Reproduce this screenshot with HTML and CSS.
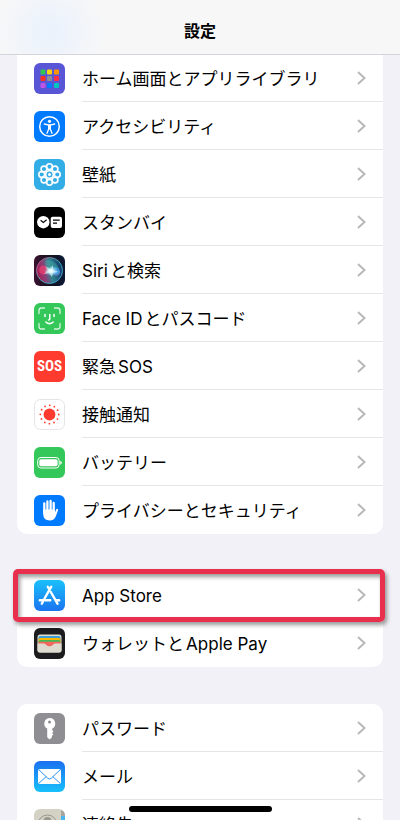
FILE: index.html
```
<!DOCTYPE html>
<html lang="ja">
<head>
    <meta charset="UTF-8" />
    <title>設定</title>
    <meta name="viewport" content="width=device-width, initial-scale=1">
    <link rel="stylesheet" href="styles.css">
</head>
<body>

<header>
  <h1>設定</h1>
</header>

<main>
  <ul class="group first">
    <li><a href="#home">
      <svg class="icon" viewBox="0 0 31 31">
        <rect width="31" height="31" rx="6" fill="#5856d6"/>
        <rect x="6.500" y="6.500" width="5" height="5" rx="1" fill="#30c850"/>
        <rect x="13" y="6.500" width="5" height="5" rx="1" fill="#ffd60a"/>
        <rect x="20" y="6.500" width="5" height="5" rx="1" fill="#ff9500"/>
        <rect x="6.500" y="13" width="5" height="5" rx="1" fill="#ff3020"/>
        <rect x="13" y="13" width="5" height="5" rx="1" fill="#8e8e93"/>
        <rect x="20" y="13" width="5" height="5" rx="1" fill="#ff2d4a"/>
        <rect x="6.500" y="20" width="5" height="5" rx="1" fill="#bf55e6"/>
        <rect x="13" y="20" width="5" height="5" rx="1" fill="#007aff"/>
        <rect x="20" y="20" width="5" height="5" rx="1" fill="#00c7be"/>
      </svg>
      <span class="label">ホーム画面とアプリライブラリ</span>
      <svg class="chevron" viewBox="0 0 9 14"><path d="M1 1l6.500 6L1 13"/></svg>
    </a></li>
    <li><a href="#accessibility">
      <svg class="icon" viewBox="0 0 31 31">
        <rect width="31" height="31" rx="6" fill="#007aff"/>
        <circle cx="15.500" cy="15.500" r="9.800" fill="none" stroke="#fff" stroke-width="1.500"/>
        <circle cx="15.500" cy="10.300" r="1.600" fill="#fff"/>
        <path d="M10.300 13l3.700.8h3l3.700-.8M14.700 14v4l-1.700 4.300M16.300 14v4l1.700 4.300" fill="none" stroke="#fff" stroke-width="1.300" stroke-linecap="round" stroke-linejoin="round"/>
        <path d="M14 13.600h3v4.900h-3z" fill="#fff"/>
      </svg>
      <span class="label">アクセシビリティ</span>
      <svg class="chevron" viewBox="0 0 9 14"><path d="M1 1l6.500 6L1 13"/></svg>
    </a></li>
    <li><a href="#wallpaper">
      <svg class="icon" viewBox="0 0 31 31">
        <rect width="31" height="31" rx="6" fill="#32ade6"/>
        <g fill="none" stroke="#fff" stroke-width="1.600">
          <circle cx="15.500" cy="7.700" r="2.900"/>
          <circle cx="21" cy="10" r="2.900"/>
          <circle cx="23.300" cy="15.500" r="2.900"/>
          <circle cx="21" cy="21" r="2.900"/>
          <circle cx="15.500" cy="23.300" r="2.900"/>
          <circle cx="10" cy="21" r="2.900"/>
          <circle cx="7.700" cy="15.500" r="2.900"/>
          <circle cx="10" cy="10" r="2.900"/>
          <circle cx="15.500" cy="15.500" r="3.800"/>
        </g>
        <circle cx="15.500" cy="15.500" r="1.500" fill="#fff"/>
      </svg>
      <span class="label">壁紙</span>
      <svg class="chevron" viewBox="0 0 9 14"><path d="M1 1l6.500 6L1 13"/></svg>
    </a></li>
    <li><a href="#standby">
      <svg class="icon" viewBox="0 0 31 31">
        <rect width="31" height="31" rx="6" fill="#000"/>
        <circle cx="9.300" cy="15.200" r="6.200" fill="#fff"/>
        <path d="M6.600 13.300l2.700 2.200 3.300-2.700" fill="none" stroke="#000" stroke-width="1.100"/>
        <rect x="16.700" y="9.700" width="11.300" height="11.300" rx="2" fill="#fff"/>
        <path d="M19 13.200h6.700M19 16.200h4" stroke="#000" stroke-width="1.200"/>
      </svg>
      <span class="label">スタンバイ</span>
      <svg class="chevron" viewBox="0 0 9 14"><path d="M1 1l6.500 6L1 13"/></svg>
    </a></li>
    <li><a href="#siri">
      <svg class="icon" viewBox="0 0 31 31">
        <defs>
          <linearGradient id="siri-bg" x1="0" y1="0" x2="1" y2="0">
            <stop offset="0" stop-color="#3a1030"/>
            <stop offset=".5" stop-color="#12141c"/>
            <stop offset="1" stop-color="#0c1834"/>
          </linearGradient>
          <linearGradient id="siri-ring" x1="0" y1="0" x2="1" y2="1">
            <stop offset="0" stop-color="#d13d7c"/>
            <stop offset=".5" stop-color="#4ab0b0"/>
            <stop offset="1" stop-color="#3a8fe0"/>
          </linearGradient>
          <linearGradient id="siri-orb" x1="0" y1=".6" x2="1" y2=".4">
            <stop offset="0" stop-color="#b01850"/>
            <stop offset=".3" stop-color="#8b4078"/>
            <stop offset=".55" stop-color="#2f8590"/>
            <stop offset="1" stop-color="#10356a"/>
          </linearGradient>
          <radialGradient id="siri-glow">
            <stop offset="0" stop-color="#fff"/>
            <stop offset=".3" stop-color="#e4ffff" stop-opacity=".9"/>
            <stop offset="1" stop-color="#8adcf0" stop-opacity="0"/>
          </radialGradient>
        </defs>
        <rect width="31" height="31" rx="6" fill="url(#siri-bg)"/>
        <circle cx="15.500" cy="15.500" r="13" fill="url(#siri-orb)" stroke="url(#siri-ring)" stroke-width="1"/>
        <path d="M5 15c2-7 7-5 10 0s8 8 11 3c-1-7-7-6-11-2S7 22 5 15z" fill="#ef3f70" opacity=".75"/>
        <path d="M15 15c4-4 9-4 11 1 0 6-7 6-11-1z" fill="#329be9" opacity=".9"/>
        <path d="M11 6c5-3 12 2 14 8-3-2-7 2-9 2s-5-5-5-10z" fill="#49b9ae" opacity=".4"/>
        <path d="M11 11l5 3 3-4 0 5 6 2-6 1-1 4-3-4-5 1 4-4z" fill="#fff" opacity=".6"/>
        <ellipse cx="17" cy="16" rx="7" ry="5" fill="url(#siri-glow)"/>
      </svg>
      <span class="label">Siriと検索</span>
      <svg class="chevron" viewBox="0 0 9 14"><path d="M1 1l6.500 6L1 13"/></svg>
    </a></li>
    <li><a href="#faceid">
      <svg class="icon" viewBox="0 0 31 31">
        <rect width="31" height="31" rx="6" fill="#34c759"/>
        <g fill="none" stroke="#fff" stroke-linecap="round">
          <path d="M5 10.500V7.500Q5 5 7.500 5h3M20.500 5h3Q26 5 26 7.500v3M26 20.500v3Q26 26 23.500 26h-3M10.500 26h-3Q5 26 5 23.500v-3" stroke-width="1.300" opacity=".8"/>
          <path d="M11 11.500v2M20 11.500v2M15.800 11.500v4.500q0 1-1.300 1M11.800 19q3.700 3.300 7.400 0" stroke-width="1.500"/>
        </g>
      </svg>
      <span class="label">Face IDとパスコード</span>
      <svg class="chevron" viewBox="0 0 9 14"><path d="M1 1l6.500 6L1 13"/></svg>
    </a></li>
    <li><a href="#sos">
      <span class="icon sos">SOS</span>
      <span class="label">緊急SOS</span>
      <svg class="chevron" viewBox="0 0 9 14"><path d="M1 1l6.500 6L1 13"/></svg>
    </a></li>
    <li><a href="#exposure">
      <svg class="icon" viewBox="0 0 31 31">
        <rect x=".5" y=".5" width="30" height="30" rx="6" fill="#fff" stroke="#e5e5e7"/>
        <circle cx="15.500" cy="15.500" r="5.900" fill="#ff3b30"/>
        <circle cx="15.500" cy="15.500" r="9.200" fill="none" stroke="#ff3b30" stroke-width="1.800" stroke-linecap="round" stroke-dasharray="0 4.817"/>
      </svg>
      <span class="label">接触通知</span>
      <svg class="chevron" viewBox="0 0 9 14"><path d="M1 1l6.500 6L1 13"/></svg>
    </a></li>
    <li><a href="#battery">
      <svg class="icon" viewBox="0 0 31 31">
        <rect width="31" height="31" rx="6" fill="#34c759"/>
        <rect x="3.700" y="10.500" width="21.500" height="10.500" rx="3.300" fill="none" stroke="#fff" stroke-width="1"/>
        <rect x="5.300" y="12.200" width="18.300" height="7.100" rx="1.800" fill="#fff"/>
        <path d="M26.300 13.800q1.500.3 1.500 2t-1.500 2z" fill="#fff"/>
      </svg>
      <span class="label">バッテリー</span>
      <svg class="chevron" viewBox="0 0 9 14"><path d="M1 1l6.500 6L1 13"/></svg>
    </a></li>
    <li><a href="#privacy">
      <svg class="icon" viewBox="0 0 31 31">
        <rect width="31" height="31" rx="6" fill="#007aff"/>
        <path d="M10.300 8.500v9M13.400 6.500v10M16.600 6v10M19.700 8v10" stroke="#fff" stroke-width="2.300" stroke-linecap="round"/>
        <path d="M9.150 14.500h11.700v3.300l1.300-3.200q.7-1.200 1.700-.5.500.4.200 1.200l-2.300 6.200q-1.700 4-5.900 4-6.700 0-6.700-7z" fill="#fff"/>
      </svg>
      <span class="label">プライバシーとセキュリティ</span>
      <svg class="chevron" viewBox="0 0 9 14"><path d="M1 1l6.500 6L1 13"/></svg>
    </a></li>
  </ul>

  <ul class="group">
    <li class="marked"><a href="#appstore">
      <svg class="icon" viewBox="0 0 31 31">
        <defs>
          <linearGradient id="store-bg" x1="0" y1="0" x2="0" y2="1">
            <stop offset="0" stop-color="#1ac0fb"/>
            <stop offset="1" stop-color="#1b74f0"/>
          </linearGradient>
        </defs>
        <rect width="31" height="31" rx="6" fill="url(#store-bg)"/>
        <path d="M17.200 6.800l-6.700 11.700M8.800 22l-1 1.700M13.800 6.800l1.700 2.700M16.800 12l6.700 11.700M5.800 20.200h10.500M21.500 20.200h3.700" stroke="#fff" stroke-width="2.400" stroke-linecap="round"/>
      </svg>
      <span class="label">App Store</span>
      <svg class="chevron" viewBox="0 0 9 14"><path d="M1 1l6.500 6L1 13"/></svg>
    </a></li>
    <li><a href="#wallet">
      <svg class="icon" viewBox="0 0 31 31">
        <rect width="31" height="31" rx="6" fill="#1c1c1e"/>
        <rect x="3.500" y="6.500" width="24" height="18" rx="2.500" fill="#dedbd0"/>
        <rect x="4.500" y="8" width="22" height="5" rx="1.500" fill="#3c9fd5"/>
        <rect x="4.500" y="10" width="22" height="5" rx="1.500" fill="#ffb400"/>
        <rect x="4.500" y="12" width="22" height="5" rx="1.500" fill="#45b854"/>
        <path d="M4.500 13.700h22v3.300h-7q-4 3.500-8 0h-7z" fill="#f2685c"/>
        <path d="M3.500 15.500h6q1.500 0 2.500 1.200 1.500 1.800 3.500 1.800t3.500-1.800q1-1.200 2.500-1.200h6V22q0 2.500-2.500 2.500H6Q3.500 24.500 3.500 22z" fill="#dedbd0"/>
      </svg>
      <span class="label">ウォレットとApple Pay</span>
      <svg class="chevron" viewBox="0 0 9 14"><path d="M1 1l6.500 6L1 13"/></svg>
    </a></li>
  </ul>

  <ul class="group">
    <li><a href="#passwords">
      <svg class="icon" viewBox="0 0 31 31">
        <rect width="31" height="31" rx="6" fill="#8e8e93"/>
        <path fill-rule="evenodd" d="M15.500 5a5.600 5.600 0 0 1 2.800 10.500v1.700l1.200 1.200-1.400 1.600 1.200 1.500-1.600 1.700.4 1-2.600 2.300-2.300-2.200v-8.800A5.600 5.600 0 0 1 15.500 5zm0 2.500a1.500 1.500 0 1 0 0 3 1.500 1.500 0 0 0 0-3z" fill="#fff"/>
      </svg>
      <span class="label">パスワード</span>
      <svg class="chevron" viewBox="0 0 9 14"><path d="M1 1l6.500 6L1 13"/></svg>
    </a></li>
    <li><a href="#mail">
      <svg class="icon" viewBox="0 0 31 31">
        <defs>
          <linearGradient id="mail-bg" x1="0" y1="0" x2="0" y2="1">
            <stop offset="0" stop-color="#1a70f0"/>
            <stop offset="1" stop-color="#17c0fb"/>
          </linearGradient>
        </defs>
        <rect width="31" height="31" rx="6" fill="url(#mail-bg)"/>
        <rect x="4" y="8" width="23" height="15" rx="2" fill="#fff"/>
        <path d="M4.800 8.700l9 8.600q1.700 1.400 3.400 0l9-8.600M4.800 22.300l7.500-6.700M26.200 22.300l-7.500-6.700" fill="none" stroke="#2e95f2" stroke-width="1"/>
      </svg>
      <span class="label">メール</span>
      <svg class="chevron" viewBox="0 0 9 14"><path d="M1 1l6.500 6L1 13"/></svg>
    </a></li>
    <li><a href="#contacts">
      <svg class="icon" viewBox="0 0 31 31">
        <rect width="31" height="31" rx="6" fill="#d4d1c5"/>
        <path d="M27 1.200V7h4q0-4.500-4-5.800z" fill="#a5a39c"/>
        <path d="M27 7h4v8h-4z" fill="#4bb5ef"/>
        <path d="M27 15h4v8h-4z" fill="#f09a37"/>
        <circle cx="13.500" cy="15.500" r="9.500" fill="none" stroke="#99978e" stroke-width="1"/>
        <circle cx="13.500" cy="12" r="4" fill="#99978e"/>
        <path d="M6.500 21q2-4 7-4t7 4q-7 6-14 0z" fill="#99978e"/>
      </svg>
      <span class="label">連絡先</span>
      <svg class="chevron" viewBox="0 0 9 14"><path d="M1 1l6.500 6L1 13"/></svg>
    </a></li>
  </ul>
</main>

<div class="home-bar"></div>

</body>
</html>
```
FILE: styles.css
```
* {
  box-sizing: border-box;
}

body {
  margin: 0;
  height: 100vh;
  overflow: hidden;
  display: flex;
  flex-direction: column;
  background: #f2f1f7;
  color: #000;
  font-family: Inter, "Noto Sans CJK JP", sans-serif;
  font-size: 17px;
}

/* Title bar */
header {
  flex: none;
  height: 55px;
  padding-top: 18px;
  background: radial-gradient(circle at 50px 32px, #eaf2fd, #f7f7f7 56px);
  border-bottom: 1px solid #d5d4da;
  text-align: center;
}

h1 {
  margin: 0;
  font-size: 16px;
  line-height: 26px;
  font-weight: 700;
}

main {
  flex: 1;
  min-height: 0;
  overflow: hidden;
  padding: 0 17px;
}

/* Rounded lists */
.group {
  list-style-type: none;
  margin: 0 0 37px;
  padding: 0;
  background: #fff;
  border-radius: 10px;
}

.first {
  margin-top: -1px;
  border-radius: 0 0 10px 10px;
}

.group li {
  position: relative;
}

.group a {
  display: flex;
  align-items: center;
  height: 48px;
  padding: 0 17px;
  color: inherit;
  text-decoration: none;
}

/* Line between two rows, starts at the text */
.group li + li::before {
  content: "";
  position: absolute;
  top: -1px;
  left: 65px;
  right: 0;
  height: 1px;
  background: #e6e6e8;
}

.icon {
  flex: none;
  width: 31px;
  height: 31px;
  margin-right: 17px;
}

.sos {
  border-radius: 6px;
  background: #ff3b30;
  color: #fff;
  font-family: "Roboto Condensed", Roboto, sans-serif;
  font-size: 15px;
  font-weight: 700;
  line-height: 31px;
  text-align: center;
}

.label {
  flex: 1;
  padding-top: 2px;
  line-height: 26px;
  white-space: nowrap;
  text-autospace: normal;
}

.chevron {
  flex: none;
  width: 9px;
  height: 14px;
  fill: none;
  stroke: #b9b9bc;
  stroke-width: 2;
}

/* Red frame around the row to tap */
.marked::after {
  content: "";
  position: absolute;
  z-index: 1;
  inset: -2px -2px -3px -4px;
  border: 5px solid #e8304e;
  border-radius: 5px;
  box-shadow: 2px 3px 4px rgba(0, 0, 0, 0.4), inset 2px 3px 4px rgba(0, 0, 0, 0.4);
  pointer-events: none;
}

.home-bar {
  position: fixed;
  bottom: 8px;
  left: 50%;
  width: 143px;
  height: 6px;
  margin-left: -71px;
  border-radius: 3px;
  background: #000;
}
```
